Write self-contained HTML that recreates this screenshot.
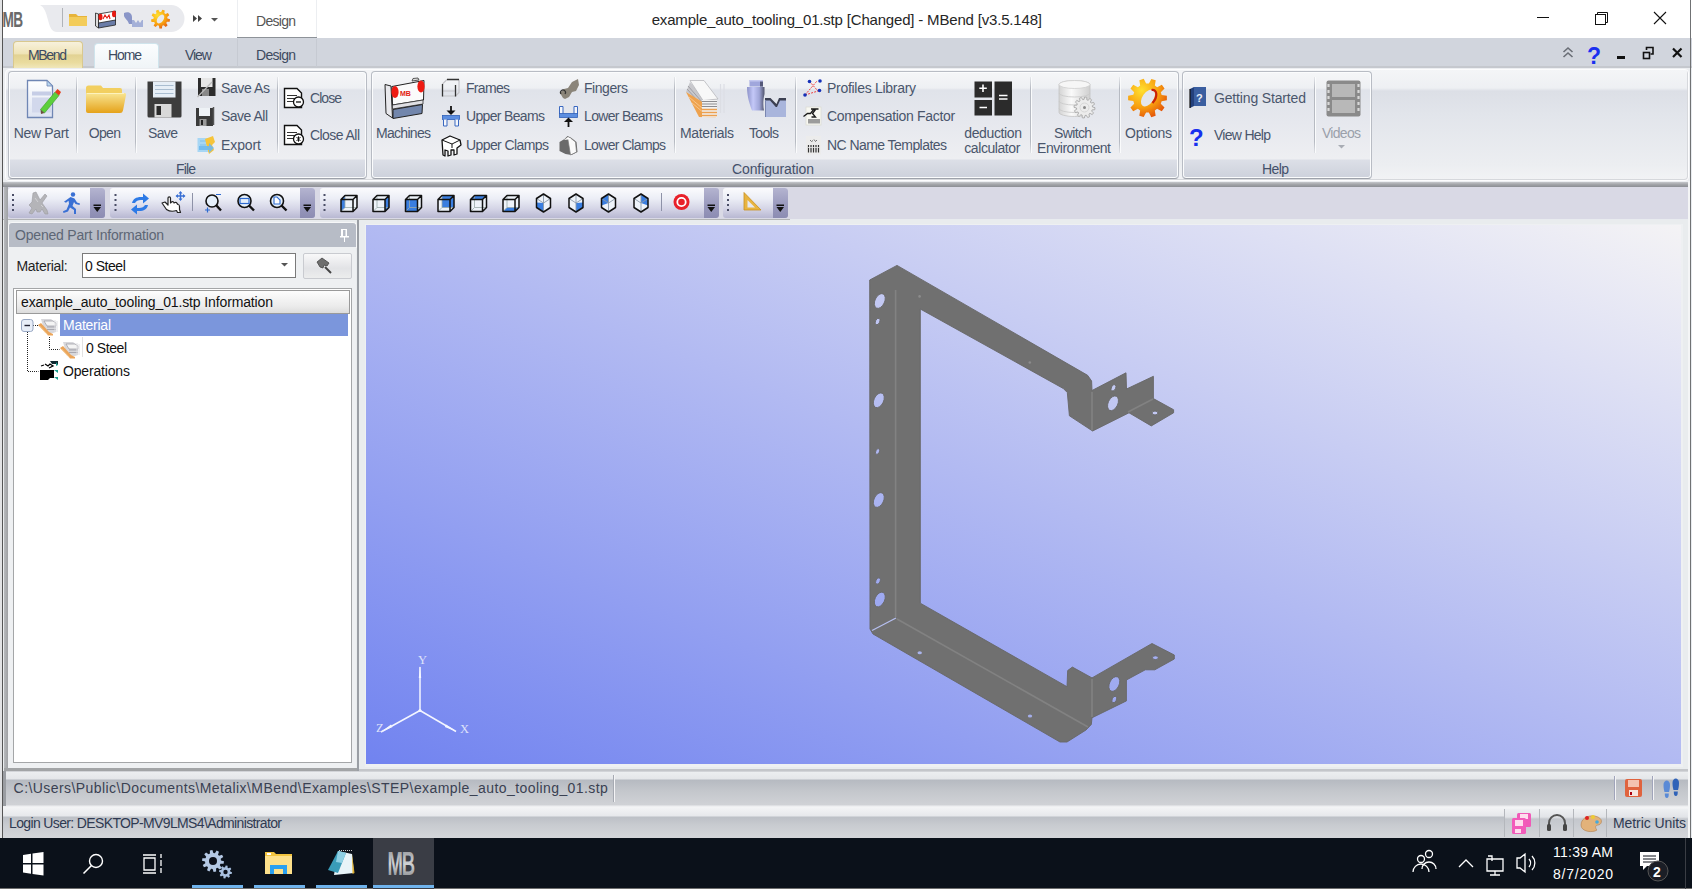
<!DOCTYPE html>
<html><head><meta charset="utf-8">
<style>
html,body{margin:0;padding:0}
body{width:1692px;height:889px;overflow:hidden;position:relative;font-family:"Liberation Sans",sans-serif;background:#e8ebef;color:#1e2a44}
.a{position:absolute}
.t{position:absolute;white-space:nowrap;line-height:1}
svg{position:absolute;overflow:visible}
.grp{position:absolute;top:71px;height:106px;border:1px solid #b8bcc4;border-bottom-color:#9ea2aa;border-radius:4px;background:linear-gradient(#f5f6f8 0px,#eef0f3 16px,#e0e3ea 18px,#e6e8ee 50px,#eeeff2 87px,#dcdfe7 88px,#cdd1db 106px);box-shadow:inset 0 0 0 1px #fbfcfd}
.lbl{font-size:14px;color:#44506a}
.rl{font-size:14px;color:#4a566c}
.tb{position:absolute;top:188px;height:30px;border-radius:3px;background:linear-gradient(#fbfbfd 0%,#eceef6 35%,#d4d4e6 70%,#b8b8d2 100%)}
.chev{position:absolute;top:188px;width:15px;height:30px;border-radius:0 3px 3px 0;background:linear-gradient(#b4b4d0,#9898bc 60%,#8c8cb2)}
.sep{position:absolute;top:77px;width:1px;height:76px;background:linear-gradient(rgba(180,184,192,0.2),#b6bac2 15%,#b6bac2 85%,rgba(180,184,192,0.2));box-shadow:1px 0 0 #fafbfc}

</style></head><body>

<!-- ===== TITLE BAR ===== -->
<div class="a" style="left:0;top:0;width:1692px;height:38px;background:#fff"></div>
<div class="t" style="left:651.7px;top:12px;font-size:15px;letter-spacing:-0.182px;color:#262626">example_auto_tooling_01.stp [Changed] - MBend [v3.5.148]</div>
<!-- QAT -->
<svg style="left:0;top:0" width="240" height="38">
<path d="M40 5 H171 A13.5 13.5 0 0 1 171 32 H57 C52 32 50 28 48 20 C46 12 44 7 40 5 Z" fill="#e9eaee"/>
<line x1="62.5" y1="8" x2="62.5" y2="27" stroke="#b0b3b8"/>
<text transform="translate(2.5 27) scale(0.62 1)" font-family="Liberation Sans" font-weight="bold" font-size="22" fill="#6a6a6a" letter-spacing="-1">MB</text>
<!-- folder -->
<path d="M69 14 h7 l2 2 h9 v10 h-18z" fill="#e7b43a"/><path d="M69 17 h18 v9 h-18z" fill="#f3cc5a"/>
<!-- machine -->
<path d="M95.5 13 l3 1 v14 l-3 -2z" fill="#ddd" stroke="#222" stroke-width="0.8"/><path d="M98.5 14 l17 -3 v10 l-17 3z" fill="#fff" stroke="#222" stroke-width="0.8"/><ellipse cx="100.5" cy="17" rx="2" ry="3.2" fill="#e81a12"/><ellipse cx="114" cy="14" rx="2" ry="3.2" fill="#e81a12"/><path d="M103 19 l2 -4 l2 3 l2 -3 l1 4" fill="none" stroke="#e21b12" stroke-width="1.1"/><path d="M98.5 23 l17 -3 v5 l-17 3z" fill="#6a7ca8" stroke="#222" stroke-width="0.8"/>
<!-- tools -->
<path d="M124 13 c4 -2 8 0 8 4 v7 h-3 c-1 -4 -4 -5 -5 -8z" fill="#8a96c8"/><path d="M132 20 h11 v7 h-11z M134 20 l2 3 l2 -3 l2 3 l2 -3" fill="#a4b0d8"/>
<!-- gear -->
<path d="M167.48,18.41 L170.00,19.24 L169.61,21.71 L166.95,21.71 L166.22,23.04 L167.62,25.29 L165.74,26.93 L163.70,25.23 L162.29,25.77 L161.91,28.39 L159.41,28.44 L158.95,25.83 L157.52,25.33 L155.54,27.11 L153.60,25.53 L154.92,23.23 L154.15,21.94 L151.49,22.02 L151.02,19.57 L153.51,18.66 L153.74,17.16 L151.66,15.53 L152.87,13.34 L155.36,14.24 L156.51,13.25 L155.96,10.66 L158.29,9.76 L159.62,12.06 L161.13,12.03 L162.38,9.69 L164.75,10.50 L164.29,13.12 L165.47,14.07 L167.93,13.08 L169.22,15.22 L167.19,16.93Z" fill="url(#gOptQ)"/><defs><radialGradient id="gOptQ" cx="0.35" cy="0.3" r="0.8"><stop offset="0" stop-color="#ffe030"/><stop offset="0.6" stop-color="#f8a010"/><stop offset="1" stop-color="#e05010"/></radialGradient></defs><ellipse cx="160.5" cy="19" rx="3" ry="5" transform="rotate(35 160.5 19)" fill="#e8e9ee"/>
<path d="M193 15 l4 3.5 l-4 3.5z M198 15 l4 3.5 l-4 3.5z" fill="#444"/>
<path d="M211 18 h7 l-3.5 3.5z" fill="#555"/>
</svg>
<div class="a" style="left:237px;top:0;width:1px;height:38px;background:#eceef1"></div>
<div class="a" style="left:316px;top:0;width:1px;height:38px;background:#eceef1"></div>
<div class="a" style="left:237px;top:37px;width:80px;height:2px;background:#8e9399"></div>
<div class="t" style="left:256.0px;top:14px;font-size:14px;letter-spacing:-0.72px;color:#555">Design</div>
<!-- window controls -->
<div class="a" style="left:1537px;top:17px;width:12px;height:1px;background:#111"></div>
<svg style="left:1590px;top:10px" width="24" height="20"><rect x="5.5" y="4.5" width="10" height="10" fill="none" stroke="#111"/><path d="M7.5 4.5 v-2 h10 v10 h-2" fill="none" stroke="#111"/></svg>
<svg style="left:1650px;top:8px" width="20" height="20"><path d="M4 4 L16 16 M16 4 L4 16" stroke="#111" stroke-width="1.1"/></svg>


<!-- ===== TAB ROW ===== -->
<div class="a" style="left:0;top:38px;width:1692px;height:30px;background:#d1d5dd"></div>
<div class="a" style="left:0;top:66px;width:1692px;height:2px;background:#c5c8ce"></div>
<div class="a" style="left:13px;top:41px;width:68px;height:26px;border:1px solid #d9c88e;border-bottom:none;border-radius:4px 4px 0 0;background:linear-gradient(#f7f1dc 0%,#efe3b6 45%,#e2d293 50%,#eadc9f 80%,#f0e7bb 100%)"></div>
<div class="t" style="left:28.0px;top:48px;font-size:14px;letter-spacing:-1.35px;color:#3d4a5f">MBend</div>
<div class="a" style="left:94px;top:43px;width:63px;height:27px;border:1px solid #cfe4ec;border-bottom:none;border-radius:4px 4px 0 0;background:linear-gradient(#fbfdfe,#eef3f6)"></div>
<div class="t" style="left:108.0px;top:48px;font-size:14px;letter-spacing:-1.10px;color:#3d4a5f">Home</div>
<div class="t" style="left:185.0px;top:48px;font-size:14px;letter-spacing:-1.07px;color:#3d4a5f">View</div>
<div class="a" style="left:237px;top:39px;width:1px;height:28px;background:#c6cad2"></div><div class="a" style="left:316px;top:39px;width:1px;height:28px;background:#c6cad2"></div>
<div class="t" style="left:256.0px;top:48px;font-size:14px;letter-spacing:-0.72px;color:#3d4a5f">Design</div>
<!-- MDI controls -->
<svg style="left:1560px;top:44px" width="130" height="24">
<path d="M3.5 8 l4.5 -4 l4.5 4 M3.5 13 l4.5 -4 l4.5 4" fill="none" stroke="#6a6e76" stroke-width="1.6"/>
<text x="27" y="20" font-family="Liberation Sans" font-weight="bold" font-size="23" fill="#1a30f0">?</text>
<rect x="57" y="12" width="8" height="3" fill="#111"/>
<rect x="83.5" y="8.5" width="6" height="6" fill="none" stroke="#111" stroke-width="1.6"/><path d="M86.5 6 v-2.5 h6.5 v6.5 h-2.5" fill="none" stroke="#111" stroke-width="1.6"/>
<path d="M113 4.5 l8.5 8.5 M121.5 4.5 l-8.5 8.5" stroke="#111" stroke-width="2.2"/>
</svg>

<!-- ===== RIBBON ===== -->
<div class="a" style="left:3px;top:68px;width:1687px;height:118px;background:#eceef1"></div>
<div class="a" style="left:5px;top:69px;width:1682px;height:110px;border-radius:4px;background:linear-gradient(#f4f5f7 0px,#eef0f3 18px,#dcdfe6 21px,#e2e5eb 45px,#eceef1 95px,#f2f3f5 110px);border:1px solid #fdfdfe;box-shadow:inset -1px -1px 0 #d6d8dc"></div>
<div class="a" style="left:3px;top:182px;width:1687px;height:5px;background:linear-gradient(#c4c6ca,#a2a4a8 50%,#8c8e94)"></div>
<div class="grp" style="left:8px;width:357px"></div>
<div class="grp" style="left:371px;width:806px"></div>
<div class="grp" style="left:1182px;width:188px"></div>
<!-- separators -->
<div class="sep" style="left:76px"></div><div class="sep" style="left:135px"></div><div class="sep" style="left:277px"></div>
<div class="sep" style="left:674px"></div><div class="sep" style="left:795px"></div><div class="sep" style="left:1030px"></div><div class="sep" style="left:1119px"></div>
<div class="sep" style="left:1314px"></div>
<!-- ribbon icons: File -->
<svg style="left:0;top:0" width="1400" height="186">
<defs>
<linearGradient id="gFold" x1="0" y1="0" x2="0" y2="1"><stop offset="0" stop-color="#f8e592"/><stop offset="1" stop-color="#e5a21a"/></linearGradient>
<linearGradient id="gDoc" x1="0" y1="0" x2="0" y2="1"><stop offset="0" stop-color="#ffffff"/><stop offset="1" stop-color="#dde3f2"/></linearGradient>
</defs>
<!-- New Part -->
<path d="M27.5 80.5 H47 L52.5 86 V117.5 H27.5 Z" fill="url(#gDoc)" stroke="#6f86b4" stroke-width="1.3"/>
<path d="M47 80.5 V86 H52.5z" fill="#b8d6f0" stroke="#6f86b4" stroke-width="0.8"/>
<rect x="32" y="91.5" width="19" height="4" fill="#c6cde6"/><rect x="32" y="97.5" width="19" height="15" fill="#d2d8ec"/>
<path d="M40.5 109.5 L55 92 L59 95.5 L44.5 113 Z" fill="#5ccf3c" stroke="#3f9a2a" stroke-width="0.6"/>
<path d="M55 92 L57.5 89 L61 92 L59 95.5z" fill="#e23c1a"/>
<path d="M40.5 109.5 L44.5 113 L41 114z" fill="#6a5040"/>
<!-- Open -->
<path d="M86 88 Q86 85.5 88.5 85.5 H101 L103 88 H120 Q122 88 122 90 V96 H86z" fill="#f2cf60"/>
<path d="M86 93 H124.5 Q126.5 93 126 95 L123 110.5 Q122.5 113 120 113 H88 Q86 113 86 111z" fill="url(#gFold)"/>
<path d="M87 93.5 H124" stroke="#fff6c8" stroke-width="1" opacity="0.8"/>
<!-- Save -->
<path d="M147.5 81.5 H181.5 V116 Q181.5 117.5 180 117.5 H149 Q147.5 117.5 147.5 116z" fill="#3c3c3c"/>
<rect x="153" y="81.5" width="22.5" height="16" fill="#e6eef6"/>
<path d="M155 85.5 H173.5 M155 89.5 H173.5 M155 93.5 H173.5" stroke="#a9bdd0" stroke-width="1"/>
<rect x="154.5" y="104" width="17" height="13.5" fill="#d8d8d8"/><rect x="156.5" y="106" width="4.5" height="9" fill="#2a2a2a"/>
<!-- Save As -->
<path d="M198 78 H215.5 V96 H198z" fill="#2c2c2c"/><rect x="201" y="78" width="11.5" height="9" fill="#e6e6e6"/><rect x="202" y="89" width="7" height="7" fill="#888"/>
<path d="M197.5 97 L212 82" stroke="#bbb" stroke-width="1.2"/>
<!-- Save All -->
<path d="M196 108 H213 V126 H196z" fill="#3a3a3a"/><rect x="199" y="108" width="11" height="8" fill="#eef2f6"/><rect x="199.5" y="119" width="7" height="7" fill="#999"/><rect x="201" y="120" width="2" height="5" fill="#222"/>
<path d="M213.5 107 V125" stroke="#555" stroke-width="1.5"/>
<!-- Export -->
<rect x="197.5" y="138" width="12" height="14" fill="#a7d6f4"/><path d="M200 141 h8 M200 145 h6" stroke="#7ec0ea" stroke-width="1"/>
<path d="M205 139 l8 -3 l2 6 l-3 3 l2 5 l-5 4 l-1 -3z" fill="#f6c43a"/><path d="M199 146 h10 v-3 l5 5 l-5 5 v-3 h-10z" fill="#6fb9ee" opacity="0.9"/>
<!-- Close -->
<path d="M284.5 88.5 H297 L301.5 93 V107.5 H284.5z" fill="#fff" stroke="#111" stroke-width="1.4"/>
<path d="M287 95.5 H297 M287 98.5 H295 M287 101.5 H293" stroke="#333" stroke-width="1.2"/>
<circle cx="298.5" cy="102" r="5" fill="#fff" stroke="#111" stroke-width="1.3"/><path d="M296 102h5" stroke="#111" stroke-width="1.3"/>
<!-- Close All -->
<path d="M284.5 125.5 H297 L301.5 130 V144.5 H284.5z" fill="#fff" stroke="#111" stroke-width="1.4"/>
<path d="M287 132.5 H297 M287 135.5 H295 M287 138.5 H293" stroke="#333" stroke-width="1.2"/>
<circle cx="298.5" cy="139" r="5" fill="#fff" stroke="#111" stroke-width="1.3"/><path d="M296.5 137l4 4 M300.5 137l-4 4 M298.5 136.3v5.4" stroke="#111" stroke-width="1"/>
</svg>
<!-- ribbon icons: Configuration + Help -->
<svg style="left:0;top:0" width="1400" height="186">
<defs>
<linearGradient id="gGear" x1="0" y1="0" x2="1" y2="1"><stop offset="0" stop-color="#ffd21a"/><stop offset="0.6" stop-color="#f59a0c"/><stop offset="1" stop-color="#e0520a"/></linearGradient>
<linearGradient id="gTool" x1="0" y1="0" x2="1" y2="0"><stop offset="0" stop-color="#8c94c4"/><stop offset="0.5" stop-color="#b4bcec"/><stop offset="1" stop-color="#8890c0"/></linearGradient>
<linearGradient id="gDb" x1="0" y1="0" x2="1" y2="0"><stop offset="0" stop-color="#d4d4d4"/><stop offset="0.4" stop-color="#fafafa"/><stop offset="1" stop-color="#cfcfcf"/></linearGradient>
</defs>
<!-- Machines -->
<path d="M385 84.5 L391 86 L392.5 118 L386 113.5z" fill="#e8e8ec" stroke="#222" stroke-width="1"/>
<path d="M392 86.5 L424 80.5 L423.5 100 L392.5 105z" fill="#fbfbfb" stroke="#222" stroke-width="1"/>
<path d="M412 81 L413 78.5 L418 78 L419 80z" fill="#ddd" stroke="#333" stroke-width="0.8"/>
<ellipse cx="395" cy="92" rx="3.6" ry="6" fill="#ee1a12"/><ellipse cx="421" cy="86.5" rx="3.6" ry="6" fill="#ee1a12"/>
<text x="400" y="96" font-family="Liberation Sans" font-weight="bold" font-size="7" fill="#e21b12">MB</text>
<path d="M392.5 105 L423 100 L423 104 L392.5 109z" fill="#e0e0e4" stroke="#333" stroke-width="0.8"/>
<path d="M393 109.5 L422.5 104.5 L422 113.5 L393 118.5z" fill="#7286ac" stroke="#222" stroke-width="1"/>
<!-- Frames -->
<path d="M442.5 84 l4.5 -4.5 M459 79.5 v13 l-3.5 3.5 M442.5 96 h13 M443 91 h12" fill="none" stroke="#c4c4c8" stroke-width="1.2"/>
<path d="M442.5 84 v12.5 M447 79.5 h12 M455.5 85 v11.5" fill="none" stroke="#333" stroke-width="1.3"/>
<!-- Upper Beams -->
<path d="M451 106 v5" stroke="#111" stroke-width="1.8"/><path d="M446.5 110.5 h9 l-4.5 4.5z" fill="#111"/>
<rect x="442.5" y="115.5" width="17" height="4" fill="#5c8ee0" stroke="#3060b8" stroke-width="0.8"/><path d="M443.5 119.5 v6.5 h3.5 v-6.5 M455 119.5 v6.5 h3.5 v-6.5" fill="#f4f6fb" stroke="#3a68c0" stroke-width="1"/>
<!-- Upper Clamps -->
<path d="M442 140 l8 -4 l10 4 l1 5 l-4 3 v6 l-3 1 v-5 h-3 v5 l-3 1 v-5 l-3 -1 v6 l-2 -1z" fill="#fff" stroke="#111" stroke-width="1.3" stroke-linejoin="round"/><path d="M442 140 l10 4 l8 -4 M452 144 v4" fill="none" stroke="#111" stroke-width="1"/>
<!-- Fingers -->
<path d="M560 93 l4 -4 l4 -1 l4 -6 l6 -3 l1 6 l-3 6 l-4 1 l-3 5 l-4 2 l-2 -1z" fill="#8b857a"/><path d="M561 94 a2.5 2.5 0 1 1 4 0" fill="none" stroke="#333" stroke-width="1.2"/>
<!-- Lower Beams -->
<path d="M559.5 114 v-7.5 h3.5 v7.5 M574 114 v-7.5 h3.5 v7.5" fill="#f4f6fb" stroke="#3a68c0" stroke-width="1"/>
<rect x="559.5" y="113.5" width="18" height="4" fill="#5c8ee0" stroke="#3060b8" stroke-width="0.8"/>
<path d="M568.5 121 v6" stroke="#111" stroke-width="1.8"/><path d="M564 122 h9 l-4.5 -4.5z" fill="#111"/>
<!-- Lower Clamps -->
<path d="M559.5 142 l5 -3 l3 -3 l4 2 l5 4 l1 10 l-6 3 l-6 -1 l-6 -3z" fill="#6a6a6a"/><path d="M567.5 137 l3 1 l5 4 l1 10 l-6 3z" fill="#fafafa" stroke="#777" stroke-width="0.7"/><path d="M564 140 l4 -3 l3 2" fill="#fff"/>
<!-- Materials -->
<path d="M686 92 L690 82 L704 99 L701 101z" fill="#c8c8cc"/>
<path d="M690 80.5 L704 80.5 L718 99 L703 100.5z" fill="#f8f8f8" stroke="#b0b0b4" stroke-width="0.7"/>
<path d="M688 86 L702 102 M687 89 L701.5 105" stroke="#9a9aa0" stroke-width="0.9"/>
<path d="M686 92 L701 101 L716 117.5 L699 117z" fill="#eea24e"/>
<path d="M689 97 L702 108 M692 103 L704 113" stroke="#f8c890" stroke-width="0.9"/>
<rect x="702" y="100" width="15" height="17.5" fill="#f2f2f2"/>
<path d="M702 101.5 H717 M702 104 H717 M702 106.5 H717" stroke="#8c8c90" stroke-width="1.1"/>
<path d="M702 109.5 H717 M702 112.5 H717 M702 115.5 H717" stroke="#eca050" stroke-width="1.3"/>
<path d="M720.5 84 V113 M724 84 V113" stroke="#dcdee4" stroke-width="1.2"/>
<!-- Tools -->
<defs><linearGradient id="gPunch" x1="0" y1="0" x2="1" y2="0"><stop offset="0" stop-color="#8c92c8"/><stop offset="0.35" stop-color="#c4c8f8"/><stop offset="0.7" stop-color="#a0a6d8"/><stop offset="1" stop-color="#50546c"/></linearGradient></defs>
<rect x="749.5" y="80" width="13.5" height="6.5" fill="#a0a6dc"/><rect x="760" y="80" width="3" height="6.5" fill="#55597a"/><rect x="749.5" y="80" width="13.5" height="1.5" fill="#c4c8f0"/>
<path d="M747 87 L764.5 87 L764.5 94 C763 100 763 106 764 110.5 L752 110.5 C749.5 104 747 96 747 87 Z" fill="url(#gPunch)"/>
<path d="M765 99.5 h5.5 l6 6.5 l2.5 -6.5 h7 v17.5 h-21 z" fill="#a9b5dc"/>
<path d="M765 98 h5.5 l6 6 l2.5 -6 h7 v2.5 h-6 l-3 6.5 h-1.2 l-5.8 -6.5 h-5 z" fill="#3c4052"/>
<path d="M765.5 100 v17" stroke="#7a86b0" stroke-width="1"/>
<!-- Profiles Library -->
<path d="M805 95 L817 81 M809 81 L818 91 M805 95 L818 91" stroke="#f04040" stroke-width="1" stroke-dasharray="2 1.2"/>
<circle cx="809.5" cy="81.5" r="1.8" fill="#1530b8"/><circle cx="820" cy="81" r="1.8" fill="#1530b8"/><circle cx="819.5" cy="90.5" r="1.8" fill="#1530b8"/><circle cx="805" cy="95" r="1.8" fill="#1530b8"/>
<!-- Compensation Factor -->
<rect x="806" y="107" width="15" height="18" fill="#f8f8f2" stroke="#dcdcd4" stroke-width="0.8"/><rect x="808" y="119" width="12" height="4.5" fill="#9c9c9c"/>
<path d="M803.5 116.5 l4 -3 l3 0 l3 -4 l3 -0.5 M811 109 h7.5 M815.5 109.5 l-3 4 l3 3.5 h-4" fill="none" stroke="#1a1a1a" stroke-width="1.3"/>
<!-- NC Name Templates -->
<rect x="806" y="136" width="15" height="18.5" fill="#ececec"/>
<path d="M808.5 145 v7.5 M811 145 v7.5 M813.5 145 v7.5 M816 145 v7.5 M818.5 145 v7.5" stroke="#333" stroke-width="1.2"/>
<path d="M808 147.5 h11.5" stroke="#ececec" stroke-width="0.8"/>
<path d="M810 140 l1.5 1.5 l1.5 -1 M814 139.5 l1.5 2 l1.5 -1.5" fill="none" stroke="#666" stroke-width="0.9"/>
<!-- deduction calculator -->
<rect x="974.5" y="81.5" width="17.5" height="16" fill="#2b2b2b"/><rect x="974.5" y="100" width="17.5" height="15.5" fill="#2b2b2b"/><rect x="994.5" y="81.5" width="17.5" height="34" fill="#2b2b2b"/>
<path d="M983 84.5 v7.5 M979.3 88.2 h7.5 M979.5 107.5 h7.5 M999 95.5 h8.5 M999 99 h8.5" stroke="#fff" stroke-width="1.6"/>
<!-- Switch Environment -->
<path d="M1059 84.5 a15.5 4 0 0 1 31 0 v28 a15.5 4 0 0 1 -31 0z" fill="url(#gDb)" stroke="#c4c4c4" stroke-width="0.8"/>
<ellipse cx="1074.5" cy="84.5" rx="15.5" ry="4" fill="#f6f6f6" stroke="#cfcfcf" stroke-width="0.8"/>
<path d="M1059 93 a15.5 4 0 0 0 31 0 M1059 101 a15.5 4 0 0 0 31 0 M1059 108.5 a15.5 4 0 0 0 31 0" fill="none" stroke="#c8c8c8" stroke-width="0.8"/>
<path d="M1092.48,107.00 L1095.00,107.70 L1094.75,109.76 L1092.15,109.85 L1091.67,111.06 L1093.49,112.92 L1092.25,114.58 L1089.95,113.36 L1088.93,114.16 L1089.58,116.69 L1087.67,117.51 L1086.29,115.30 L1085.00,115.48 L1084.30,118.00 L1082.24,117.75 L1082.15,115.15 L1080.94,114.67 L1079.08,116.49 L1077.42,115.25 L1078.64,112.95 L1077.84,111.93 L1075.31,112.58 L1074.49,110.67 L1076.70,109.29 L1076.52,108.00 L1074.00,107.30 L1074.25,105.24 L1076.85,105.15 L1077.33,103.94 L1075.51,102.08 L1076.75,100.42 L1079.05,101.64 L1080.07,100.84 L1079.42,98.31 L1081.33,97.49 L1082.71,99.70 L1084.00,99.52 L1084.70,97.00 L1086.76,97.25 L1086.85,99.85 L1088.06,100.33 L1089.92,98.51 L1091.58,99.75 L1090.36,102.05 L1091.16,103.07 L1093.69,102.42 L1094.51,104.33 L1092.30,105.71Z" fill="#ececec" stroke="#a8a8a8" stroke-width="0.9"/><circle cx="1084.5" cy="107.5" r="4.5" fill="none" stroke="#d0d0d0" stroke-width="0.8"/><circle cx="1084.5" cy="107.5" r="1.5" fill="#8a8a8a"/>
<!-- Options -->
<defs><radialGradient id="gOpt" cx="0.35" cy="0.3" r="0.8"><stop offset="0" stop-color="#ffe030"/><stop offset="0.55" stop-color="#f8a010"/><stop offset="1" stop-color="#e04808"/></radialGradient></defs>
<path d="M1161.67,94.91 L1166.87,95.72 L1166.86,100.34 L1161.66,101.14 L1160.78,103.82 L1164.51,107.54 L1161.78,111.28 L1157.10,108.86 L1154.82,110.52 L1155.65,115.72 L1151.25,117.14 L1148.88,112.43 L1146.06,112.43 L1143.68,117.12 L1139.29,115.69 L1140.14,110.49 L1137.86,108.83 L1133.17,111.23 L1130.46,107.48 L1134.20,103.78 L1133.33,101.09 L1128.13,100.28 L1128.14,95.66 L1133.34,94.86 L1134.22,92.18 L1130.49,88.46 L1133.22,84.72 L1137.90,87.14 L1140.18,85.48 L1139.35,80.28 L1143.75,78.86 L1146.12,83.57 L1148.94,83.57 L1151.32,78.88 L1155.71,80.31 L1154.86,85.51 L1157.14,87.17 L1161.83,84.77 L1164.54,88.52 L1160.80,92.22Z" fill="url(#gOpt)"/>
<ellipse cx="1148" cy="98" rx="5.5" ry="9.5" transform="rotate(35 1148 98)" fill="#e4e6ec"/>
<path d="M1151.5 90 a5.5 9.5 35 0 1 1 13" fill="none" stroke="#c8200a" stroke-width="2.2"/>
<!-- Getting Started -->
<path d="M1190 89 l4 -2 h12 v19 h-12 l-4 2z" fill="#23407c"/><path d="M1194 87 h12 v19 h-12z" fill="#3a5ea0"/><path d="M1190 89 v19" stroke="#111" stroke-width="1.2"/>
<text x="1196" y="102" font-family="Liberation Sans" font-weight="bold" font-size="11" fill="#e8eef8">?</text>
<!-- View Help -->
<text x="1189" y="146" font-family="Liberation Sans" font-weight="bold" font-size="24" fill="#1830ee">?</text>
<!-- Videos -->
<rect x="1326.5" y="80.5" width="34" height="36" rx="2" fill="#8a8a8a"/>
<rect x="1332" y="84" width="23" height="13" fill="#b8b8b8"/><rect x="1332" y="100" width="23" height="13" fill="#b8b8b8"/>
<path d="M1328.5 84 v3 M1328.5 90 v3 M1328.5 96 v3 M1328.5 102 v3 M1328.5 108 v3 M1358.5 84 v3 M1358.5 90 v3 M1358.5 96 v3 M1358.5 102 v3 M1358.5 108 v3" stroke="#d8d8d8" stroke-width="2.2"/>
</svg>
<!-- labels -->
<div class="t rl" style="left:13.7px;top:126px;letter-spacing:-0.33px">New Part</div>
<div class="t rl" style="left:88.7px;top:126px;letter-spacing:-0.63px">Open</div>
<div class="t rl" style="left:148.0px;top:126px;letter-spacing:-0.63px">Save</div>
<div class="t rl" style="left:221.0px;top:81px;letter-spacing:-0.40px">Save As</div>
<div class="t rl" style="left:221.0px;top:109px;letter-spacing:-0.51px">Save All</div>
<div class="t rl" style="left:221.0px;top:138px;letter-spacing:-0.10px">Export</div>
<div class="t rl" style="left:310.0px;top:91px;letter-spacing:-0.95px">Close</div>
<div class="t rl" style="left:310.0px;top:128px;letter-spacing:-0.56px">Close All</div>
<div class="t rl" style="left:376.0px;top:126px;letter-spacing:-0.70px">Machines</div>
<div class="t rl" style="left:466.0px;top:81px;letter-spacing:-0.68px">Frames</div>
<div class="t rl" style="left:466.0px;top:109px;letter-spacing:-0.66px">Upper Beams</div>
<div class="t rl" style="left:466.0px;top:138px;letter-spacing:-0.59px">Upper Clamps</div>
<div class="t rl" style="left:584.0px;top:81px;letter-spacing:-0.45px">Fingers</div>
<div class="t rl" style="left:584.0px;top:109px;letter-spacing:-0.66px">Lower Beams</div>
<div class="t rl" style="left:584.0px;top:138px;letter-spacing:-0.68px">Lower Clamps</div>
<div class="t rl" style="left:680.0px;top:126px;letter-spacing:-0.35px">Materials</div>
<div class="t rl" style="left:749.0px;top:126px;letter-spacing:-0.68px">Tools</div>
<div class="t rl" style="left:827.0px;top:81px;letter-spacing:-0.29px">Profiles Library</div>
<div class="t rl" style="left:827.0px;top:109px;letter-spacing:-0.32px">Compensation Factor</div>
<div class="t rl" style="left:827.0px;top:138px;letter-spacing:-0.56px">NC Name Templates</div>
<div class="t rl" style="left:964.3px;top:126px;letter-spacing:-0.38px">deduction</div>
<div class="t rl" style="left:964.3px;top:141px;letter-spacing:-0.43px">calculator</div>
<div class="t rl" style="left:1054.0px;top:126px;letter-spacing:-0.64px">Switch</div>
<div class="t rl" style="left:1037.0px;top:141px;letter-spacing:-0.46px">Environment</div>
<div class="t rl" style="left:1125.0px;top:126px;letter-spacing:-0.20px">Options</div>
<div class="t rl" style="left:1214.0px;top:91px;letter-spacing:-0.16px">Getting Started</div>
<div class="t rl" style="left:1214.0px;top:128px;letter-spacing:-0.72px">View Help</div>
<div class="t rl" style="left:1322.0px;top:126px;letter-spacing:-0.72px;color:#9aa0aa">Videos</div>
<div class="t lbl" style="left:176.0px;top:162px;letter-spacing:-0.87px">File</div>
<div class="t lbl" style="left:732.0px;top:162px;letter-spacing:-0.11px">Configuration</div>
<div class="t lbl" style="left:1262.0px;top:162px;letter-spacing:-0.60px">Help</div>
<svg style="left:1338px;top:145px" width="8" height="5"><path d="M0 0h7l-3.5 3.5z" fill="#a8acb4"/></svg>


<!-- ===== TOOLBAR ROW ===== -->
<div class="a" style="left:3px;top:187px;width:1687px;height:32px;background:#d9d9e5"></div>
<div class="a" style="left:3px;top:219px;width:787px;height:2px;background:linear-gradient(#a8aaaa,#d0d2d4)"></div>
<div class="tb" style="left:8px;width:97px"></div><div class="chev" style="left:90px"></div>
<div class="tb" style="left:110px;width:205px"></div><div class="chev" style="left:300px"></div>
<div class="tb" style="left:320px;width:398px"></div><div class="chev" style="left:704px"></div>
<div class="tb" style="left:723px;width:65px"></div><div class="chev" style="left:773px"></div>
<svg style="left:0;top:186px" width="800" height="34">
<g fill="#4a4e66"><rect x="12" y="8" width="2" height="2"/><rect x="12" y="13" width="2" height="2"/><rect x="12" y="18" width="2" height="2"/><rect x="12" y="23" width="2" height="2"/>
<rect x="114.5" y="8" width="2" height="2"/><rect x="114.5" y="13" width="2" height="2"/><rect x="114.5" y="18" width="2" height="2"/><rect x="114.5" y="23" width="2" height="2"/>
<rect x="323.5" y="8" width="2" height="2"/><rect x="323.5" y="13" width="2" height="2"/><rect x="323.5" y="18" width="2" height="2"/><rect x="323.5" y="23" width="2" height="2"/>
<rect x="727" y="8" width="2" height="2"/><rect x="727" y="13" width="2" height="2"/><rect x="727" y="18" width="2" height="2"/><rect x="727" y="23" width="2" height="2"/></g>
<g fill="#111"><path d="M93.5 21h7.5l-3.75 5z M93.5 18.5h7.5v1.5h-7.5z"/><path d="M303.5 21h7.5l-3.75 5z M303.5 18.5h7.5v1.5h-7.5z"/><path d="M707.5 21h7.5l-3.75 5z M707.5 18.5h7.5v1.5h-7.5z"/><path d="M776.5 21h7.5l-3.75 5z M776.5 18.5h7.5v1.5h-7.5z"/></g>
<line x1="192.5" y1="7" x2="192.5" y2="25" stroke="#8e92a8"/>
<line x1="661.5" y1="7" x2="661.5" y2="25" stroke="#8e92a8"/>
<polygon points="341,13.5 345,9.5 357,9.5 357,21.5 353,25.5 341,25.5" fill="#eef3fa"/><polygon points="341,13.5 345,9.5 345,21.5 341,25.5" fill="#3a7ee0"/><path d="M345 21.5 h12 M345 9.5 v12 l-4 4" stroke="#9aa" stroke-width="0.8" fill="none"/><path d="M341 13.5 l4 -4 h12 v12 l-4 4 h-12z M341 13.5 h12 v12 M353 13.5 l4 -4" stroke="#111" stroke-width="1.5" fill="none" stroke-linejoin="round"/>
<polygon points="373,13.5 377,9.5 389,9.5 389,21.5 385,25.5 373,25.5" fill="#eef3fa"/><polygon points="385,13.5 389,9.5 389,21.5 385,25.5" fill="#3a7ee0"/><path d="M377 21.5 h12 M377 9.5 v12 l-4 4" stroke="#9aa" stroke-width="0.8" fill="none"/><path d="M373 13.5 l4 -4 h12 v12 l-4 4 h-12z M373 13.5 h12 v12 M385 13.5 l4 -4" stroke="#111" stroke-width="1.5" fill="none" stroke-linejoin="round"/>
<polygon points="405.5,13.5 409.5,9.5 421.5,9.5 421.5,21.5 417.5,25.5 405.5,25.5" fill="#eef3fa"/><polygon points="405.5,13.5 417.5,13.5 417.5,25.5 405.5,25.5" fill="#3a7ee0"/><path d="M409.5 21.5 h12 M409.5 9.5 v12 l-4 4" stroke="#9aa" stroke-width="0.8" fill="none"/><path d="M405.5 13.5 l4 -4 h12 v12 l-4 4 h-12z M405.5 13.5 h12 v12 M417.5 13.5 l4 -4" stroke="#111" stroke-width="1.5" fill="none" stroke-linejoin="round"/>
<polygon points="438,13.5 442,9.5 454,9.5 454,21.5 450,25.5 438,25.5" fill="#eef3fa"/><polygon points="442,9.5 454,9.5 454,21.5 442,21.5" fill="#3a7ee0"/><path d="M442 21.5 h12 M442 9.5 v12 l-4 4" stroke="#9aa" stroke-width="0.8" fill="none"/><path d="M438 13.5 l4 -4 h12 v12 l-4 4 h-12z M438 13.5 h12 v12 M450 13.5 l4 -4" stroke="#111" stroke-width="1.5" fill="none" stroke-linejoin="round"/>
<polygon points="470.5,13.5 474.5,9.5 486.5,9.5 486.5,21.5 482.5,25.5 470.5,25.5" fill="#eef3fa"/><polygon points="470.5,13.5 474.5,9.5 486.5,9.5 482.5,13.5" fill="#3a7ee0"/><path d="M474.5 21.5 h12 M474.5 9.5 v12 l-4 4" stroke="#9aa" stroke-width="0.8" fill="none"/><path d="M470.5 13.5 l4 -4 h12 v12 l-4 4 h-12z M470.5 13.5 h12 v12 M482.5 13.5 l4 -4" stroke="#111" stroke-width="1.5" fill="none" stroke-linejoin="round"/>
<polygon points="503,13.5 507,9.5 519,9.5 519,21.5 515,25.5 503,25.5" fill="#eef3fa"/><polygon points="503,25.5 507,21.5 519,21.5 515,25.5" fill="#3a7ee0"/><path d="M507 21.5 h12 M507 9.5 v12 l-4 4" stroke="#9aa" stroke-width="0.8" fill="none"/><path d="M503 13.5 l4 -4 h12 v12 l-4 4 h-12z M503 13.5 h12 v12 M515 13.5 l4 -4" stroke="#111" stroke-width="1.5" fill="none" stroke-linejoin="round"/>
<polygon points="543.5,8 550.5,12.5 550.5,21.5 543.5,26 536.5,21.5 536.5,12.5" fill="#eef3fa"/><polygon points="536.5,16.5 543.5,17 543.5,26 536.5,21.5" fill="#3a7ee0"/><path d="M543.5 8 V26 M536.5 12.5 L543.5 17 L550.5 12.5" stroke="#8a9aaa" stroke-width="0.9" fill="none"/><polygon points="543.5,8 550.5,12.5 550.5,21.5 543.5,26 536.5,21.5 536.5,12.5" fill="none" stroke="#111" stroke-width="1.5" stroke-linejoin="round"/>
<polygon points="576,8 583,12.5 583,21.5 576,26 569,21.5 569,12.5" fill="#eef3fa"/><polygon points="583,16.5 576,17 576,26 583,21.5" fill="#3a7ee0"/><path d="M576 8 V26 M569 12.5 L576 17 L583 12.5" stroke="#8a9aaa" stroke-width="0.9" fill="none"/><polygon points="576,8 583,12.5 583,21.5 576,26 569,21.5 569,12.5" fill="none" stroke="#111" stroke-width="1.5" stroke-linejoin="round"/>
<polygon points="608.5,8 615.5,12.5 615.5,21.5 608.5,26 601.5,21.5 601.5,12.5" fill="#eef3fa"/><polygon points="608.5,8 601.5,12.5 601.5,19.5 608.5,17" fill="#3a7ee0"/><path d="M608.5 8 V26 M601.5 12.5 L608.5 17 L615.5 12.5" stroke="#8a9aaa" stroke-width="0.9" fill="none"/><polygon points="608.5,8 615.5,12.5 615.5,21.5 608.5,26 601.5,21.5 601.5,12.5" fill="none" stroke="#111" stroke-width="1.5" stroke-linejoin="round"/>
<polygon points="641,8 648,12.5 648,21.5 641,26 634,21.5 634,12.5" fill="#eef3fa"/><polygon points="641,8 648,12.5 648,19.5 641,17" fill="#3a7ee0"/><path d="M641 8 V26 M634 12.5 L641 17 L648 12.5" stroke="#8a9aaa" stroke-width="0.9" fill="none"/><polygon points="641,8 648,12.5 648,21.5 641,26 634,21.5 634,12.5" fill="none" stroke="#111" stroke-width="1.5" stroke-linejoin="round"/>
<!-- X figure gray -->
<g fill="#b4b4b8" stroke="#9a9aa0" stroke-width="0.6">
<path d="M33 7 l3 -1 l4 8 l5 -6 l2 2 l-5 7 l5 7 l1 4 l-3 0 l-3 -5 l-2 3 h-3 l-1 -3 l-4 5 l-3 -1 l3 -5 l-3 -3 l3 -3z"/>
</g>
<path d="M35 12 l3 4 M41 19 l2 2" stroke="#d8d8dc" stroke-width="0.8"/>
<!-- runner blue -->
<g fill="#3a70d4">
<circle cx="73" cy="8.5" r="2.2"/>
<path d="M70.5 11 l4 1.5 l2.5 4 l3 1 l-0.5 1.5 l-4 -1 l-1.5 -2 l-1.5 4 l3.5 3 l0 5 l-2 0 l0 -4 l-4 -2.5 l-2 4 l-4.5 1.5 l-0.5 -1.8 l3.5 -1.5 l2.5 -6 l-0.5 -3 l-2.5 2 l-2 -1z"/>
</g>
<!-- refresh -->
<path d="M132 17 c1 -4 4 -6 9 -6 h2 v-3.5 l6 5 l-6 5 v-3.5 h-2 c-3 0 -5 1 -6 3z" fill="#2d7ae6"/>
<path d="M148 19 c-1 4 -4 6 -9 6 h-2 v3.5 l-6 -5 l6 -5 v3.5 h2 c3 0 5 -1 6 -3z" fill="#2d7ae6"/>
<!-- hand -->
<path d="M162 17 l3 -1 l3 3 v-7 c0 -1.5 2.5 -1.5 2.5 0 v5 l1 -1 c1 -1 2.5 0 2.5 1 l1 -0.5 c1 -0.5 2 0 2 1 l1 1 c1 0 1.5 1 1.5 2 v3 l1 3 h-3 l-1 -2 c-3 1 -7 1 -10 -1z" fill="#fff" stroke="#222" stroke-width="1.2" stroke-linejoin="round"/>
<path d="M180.5 6 v8 M176.5 10 h8" stroke="#3a70d4" stroke-width="1.4"/><path d="M178.5 7.5 l2 -2.5 l2 2.5z M178.5 12.5 l2 2.5 l2 -2.5z M178 8 l-2.5 2 l2.5 2z M183 8 l2.5 2 l-2.5 2z" fill="#3a70d4"/>
<!-- zoom 1 -->
<circle cx="212" cy="15" r="6" fill="#e6f0fb" stroke="#111" stroke-width="1.6"/><path d="M216 19 l5 5.5" stroke="#111" stroke-width="2.4"/><path d="M205 24 h5 M207.5 21.5 v5 M216 8.5 h5" stroke="#2d6ad0" stroke-width="1.2"/>
<!-- zoom rect -->
<circle cx="244.5" cy="15" r="6.5" fill="#e6f0fb" stroke="#111" stroke-width="1.6"/><path d="M249 19.5 l5 5" stroke="#111" stroke-width="2.4"/><rect x="240" y="12.5" width="9" height="5" fill="none" stroke="#2d6ad0" stroke-width="1.2"/>
<!-- zoom page -->
<circle cx="277" cy="15" r="6.5" fill="#e6f0fb" stroke="#111" stroke-width="1.6"/><path d="M281.5 19.5 l5 5" stroke="#111" stroke-width="2.4"/><path d="M274 11 v7 h6 v-4 l-3 -3z" fill="#fff" stroke="#2d6ad0" stroke-width="1.1"/>
<!-- red circle -->
<circle cx="681.5" cy="16" r="8" fill="#e8202a"/><circle cx="681.5" cy="16" r="4.2" fill="none" stroke="#fff" stroke-width="1.8"/><circle cx="681.5" cy="16" r="1.7" fill="#e8202a"/>
<!-- set square -->
<path d="M744 6.5 l17 17.5 h-17z" fill="#e8b440" stroke="#c89020" stroke-width="0.8"/><path d="M747.5 14 l7.5 7.5 h-7.5z" fill="#e6e8f0"/>
</svg>

<!-- ===== MAIN ===== -->
<div class="a" style="left:3px;top:220px;width:1686px;height:551px;background:#e9ecee"></div>
<!-- left panel -->
<div class="a" style="left:8px;top:222px;width:347px;height:25px;background:#b7bcc6;border-radius:4px 4px 0 0;border:1px solid #f6f7f8;border-bottom:none"></div>
<div class="a" style="left:8px;top:247px;width:348px;height:521px;background:#eef0f2"></div>
<div class="t" style="left:15.0px;top:228px;font-size:14px;letter-spacing:-0.195px;color:#5d6675">Opened Part Information</div>
<svg style="left:336px;top:226px" width="16" height="18"><path d="M5 3h6v7h2v1.5h-4v4.5h-1v-4.5h-4v-1.5h1z" fill="#fff"/><rect x="7" y="4" width="2.5" height="6" fill="#b8bdc7"/></svg>
<div class="t" style="left:16.5px;top:259px;font-size:14px;letter-spacing:-0.312px;color:#1f1f1f">Material:</div>
<div class="a" style="left:82px;top:253px;width:212px;height:23px;background:#fff;border:1px solid #7a7a7a"></div>
<div class="t" style="left:85.0px;top:259px;font-size:14px;letter-spacing:-0.467px;color:#111">0 Steel</div>
<svg style="left:280px;top:262px" width="10" height="6"><path d="M1 1h7l-3.5 3.5z" fill="#555"/></svg>
<div class="a" style="left:303px;top:253px;width:47px;height:24px;border:1px solid #c9cbd0;border-radius:2px;background:linear-gradient(#f8f8f9,#e2e3e6 60%,#eceded)"></div>
<svg style="left:314px;top:256px" width="26" height="20"><path d="M3 6 l5 -4 l7 5 l-2 3 l-3 -1 l-1 3 l-3 -1z" fill="#6e6e6e" stroke="#444" stroke-width="0.8"/><path d="M11 11 l6 6" stroke="#444" stroke-width="2"/></svg>
<div class="a" style="left:13px;top:288px;width:337px;height:473px;background:#fff;border:1.5px solid #a4a6a8"></div>
<div class="a" style="left:16px;top:290px;width:332px;height:22px;border:1px solid #9a9a9a;background:linear-gradient(#fdfdfd,#ebebeb 70%,#dcdcdc)"></div>
<div class="t" style="left:21.0px;top:295px;font-size:14px;letter-spacing:-0.126px;color:#111">example_auto_tooling_01.stp Information</div>
<div class="a" style="left:60px;top:314px;width:288px;height:22px;background:#7b96dc"></div>
<div class="t" style="left:63.0px;top:318px;font-size:14px;letter-spacing:-0.257px;color:#fff">Material</div>
<div class="t" style="left:86.0px;top:341px;font-size:14px;letter-spacing:-0.433px;color:#111">0 Steel</div>
<div class="t" style="left:63.0px;top:364px;font-size:14px;letter-spacing:-0.167px;color:#111">Operations</div>
<svg style="left:0;top:300px" width="100" height="90">
<g stroke="#222" stroke-width="1" stroke-dasharray="1 1" fill="none"><path d="M27.5 32 v39.5 h11"/><path d="M49.5 37 v12.5 h10"/><path d="M33 25.5 h5"/></g>
<rect x="21.5" y="19.5" width="11.5" height="12" rx="2.5" fill="#e8eef8" stroke="#98a8c4"/><path d="M24.5 25.5h5.5" stroke="#223" stroke-width="1.4"/>
<g transform="translate(38 17)">
<path d="M3 2 h10 l5 4 v9 l-3 1 h-8z" fill="#d8d8dc"/>
<path d="M6 4 h9 l3 2 v3 h-9z" fill="#f4f4f4" stroke="#9a9aa0" stroke-width="0.7"/>
<path d="M9 10 h9 M9 12.5 h9" stroke="#a8a8b0" stroke-width="1.1"/><path d="M17 3 v12 M19 4 v11" stroke="#e0e0e4" stroke-width="1"/>
<path d="M0 8 l3 -2 l8 9 l4 2 v1.5 h-5 z" fill="#eba55a"/><path d="M1.5 9 l8 8.5" stroke="#f6d2a0" stroke-width="0.9"/>
</g><g transform="translate(60 40)">
<path d="M3 2 h10 l5 4 v9 l-3 1 h-8z" fill="#d8d8dc"/>
<path d="M6 4 h9 l3 2 v3 h-9z" fill="#f4f4f4" stroke="#9a9aa0" stroke-width="0.7"/>
<path d="M9 10 h9 M9 12.5 h9" stroke="#a8a8b0" stroke-width="1.1"/><path d="M17 3 v12 M19 4 v11" stroke="#e0e0e4" stroke-width="1"/>
<path d="M0 8 l3 -2 l8 9 l4 2 v1.5 h-5 z" fill="#eba55a"/><path d="M1.5 9 l8 8.5" stroke="#f6d2a0" stroke-width="0.9"/>
</g>
<path d="M82.5 37 v20" stroke="#e2e2e2"/>
<g><rect x="40" y="70" width="14" height="10" fill="#000"/><path d="M48 80 l2 -2 h4 v2z" fill="#fff"/><path d="M54 70 l4 3 v-3z M54 77 l4 3 v-3z" fill="#1aa090"/>
<path d="M50 61 h8 v4 l-2 -1 l-4 0z" fill="#102830"/><path d="M56 62 l2 3 l-2 1z" fill="#1aa090"/>
<path d="M41 66 l3 -1 M45 64 l3 2 l2 -2 l3 2 l-4 2" fill="none" stroke="#000" stroke-width="1.3"/></g>
</svg>
<div class="a" style="left:4px;top:187px;width:4px;height:584px;background:linear-gradient(90deg,#b8babd,#9fa1a4)"></div>
<div class="a" style="left:4px;top:768px;width:355px;height:3px;background:#a2a4a6"></div>
<div class="a" style="left:359px;top:769px;width:1331px;height:2px;background:#c4c6ca"></div>
<!-- splitter -->
<div class="a" style="left:357px;top:220px;width:2px;height:551px;background:#9a9ea4"></div>
<!-- viewport -->
<div class="a" style="left:365px;top:224px;width:1318px;height:543px;background:#eef0f2"></div>
<div class="a" style="left:366px;top:225px;width:1315px;height:539px;background:linear-gradient(to top right,#7183f0,#b2baf2 50%,#f4f3f5)"></div>
<svg style="left:0;top:0" width="1692" height="889" viewBox="0 0 1692 889">
<path fill="#707070" stroke="#666666" stroke-width="0.9" stroke-linejoin="round" fill-rule="evenodd" d="M869.7,280.0 L897.0,265.4 L1087.6,375.3 L1091.6,381.0 L1092.0,390.5 L1126.0,372.8 L1126.5,389.0 L1153.4,376.3 L1153.4,398.6 L1173.6,409.7 L1173.6,412.8 L1151.3,425.9 L1129.0,412.8 L1092.6,431.0 L1069.4,415.8 L1067.3,392.5 L1063.3,388.5 L920.3,309.0 L920.3,603.2 L1067.0,686.7 L1067.7,670.5 L1072.4,667.1 L1092.0,677.9 L1152.0,643.5 L1174.3,655.0 L1174.3,659.0 L1154.8,669.8 L1145.3,669.8 L1126.4,680.0 L1126.4,700.9 L1092.0,717.8 L1091.3,724.5 L1086.0,730.0 L1067.0,742.0 L1060.0,742.0 L873.0,634.0 L870.0,629.0 Z M875.45,298.97 a4.8,7.8 25 1 0 8.70,4.06 a4.8,7.8 25 1 0 -8.70,-4.06 Z M875.70,320.61 a2.1,3.4 25 1 0 3.81,1.77 a2.1,3.4 25 1 0 -3.81,-1.77 Z M874.45,398.27 a4.8,7.8 25 1 0 8.70,4.06 a4.8,7.8 25 1 0 -8.70,-4.06 Z M875.97,450.74 a1.8,2.9 25 1 0 3.26,1.52 a1.8,2.9 25 1 0 -3.26,-1.52 Z M874.45,497.97 a4.8,7.8 25 1 0 8.70,4.06 a4.8,7.8 25 1 0 -8.70,-4.06 Z M876.10,580.11 a2.1,3.4 25 1 0 3.81,1.77 a2.1,3.4 25 1 0 -3.81,-1.77 Z M875.45,597.47 a4.8,7.8 25 1 0 8.70,4.06 a4.8,7.8 25 1 0 -8.70,-4.06 Z M1111.60,386.91 a2.1,3.4 25 1 0 3.81,1.77 a2.1,3.4 25 1 0 -3.81,-1.77 Z M1108.65,401.27 a4.8,7.8 25 1 0 8.70,4.06 a4.8,7.8 25 1 0 -8.70,-4.06 Z M1152.10,413.00 a2.9,1.9 0 1 0 5.80,0.00 a2.9,1.9 0 1 0 -5.80,-0.00 Z M1109.95,681.97 a4.8,7.8 25 1 0 8.70,4.06 a4.8,7.8 25 1 0 -8.70,-4.06 Z M1112.40,698.61 a2.1,3.4 25 1 0 3.81,1.77 a2.1,3.4 25 1 0 -3.81,-1.77 Z M1152.50,657.70 a2.9,1.9 0 1 0 5.80,0.00 a2.9,1.9 0 1 0 -5.80,-0.00 Z"/>

<g stroke="#828282" stroke-width="1.6" fill="none">
<line x1="895.6" y1="290" x2="895.6" y2="617"/>
<line x1="897" y1="619" x2="1088" y2="727"/>
<line x1="1092" y1="392" x2="1092" y2="430"/>
<line x1="1092" y1="679" x2="1092" y2="717"/>
<line x1="1128" y1="412" x2="1153" y2="399"/>
</g>
<line x1="872" y1="630.5" x2="896" y2="618" stroke="#b6bff0" stroke-width="1.3"/>

<g fill="#8c8c8c">
<circle cx="919.6" cy="296.4" r="1.3"/><circle cx="1029.8" cy="362.5" r="1.3"/>
<ellipse cx="919.7" cy="652.7" rx="2.2" ry="1.5" fill="#aab4ec"/><ellipse cx="1030" cy="716" rx="2.2" ry="1.5" fill="#a4aeea"/>
</g>
<!-- axes -->
<g stroke="#f4f6ff" stroke-width="1.5" fill="none">
<line x1="420" y1="710.5" x2="420" y2="667"/>
<line x1="420" y1="710.5" x2="381" y2="732"/>
<line x1="420" y1="710.5" x2="456" y2="731.5"/>
</g>
<g fill="#f4f6ff"><path d="M418.8 678 L420 666 L421.2 678z"/><path d="M391 724.5 L381 732 L392.5 727z"/><path d="M446 724.5 L456.5 731.5 L444.8 727z"/><circle cx="420" cy="710.5" r="1.5"/></g>
<g fill="#e8ecfc" font-family="Liberation Serif" font-size="12.5" opacity="0.9">
<text x="418" y="664">Y</text><text x="376" y="732">Z</text><text x="460" y="733">X</text>
</g>
</svg>

<!-- ===== STATUS BARS ===== -->
<div class="a" style="left:3px;top:771px;width:1687px;height:36px;background:linear-gradient(#b8bac0 0,#eceef0 1px,#e4e6e9 8px,#b6bac1 9px,#c4c7cc 20px,#d0d2d6 34px,#eeeff1 35px)"></div>
<div class="a" style="left:3px;top:771px;width:3px;height:35px;background:#9a9da2"></div>
<div class="t" style="left:13.6px;top:781px;font-size:14px;letter-spacing:0.425px;color:#3a4152">C:\Users\Public\Documents\Metalix\MBend\Examples\STEP\example_auto_tooling_01.stp</div>
<div class="a" style="left:613px;top:775px;width:1px;height:27px;background:#a6aab2;box-shadow:1px 0 0 #f4f4f6"></div>
<div class="a" style="left:1614px;top:776px;width:1px;height:24px;background:#a0a4ba;box-shadow:1px 0 0 #f4f4f6"></div>
<div class="a" style="left:1652px;top:776px;width:1px;height:24px;background:#a0a4ba;box-shadow:1px 0 0 #f4f4f6"></div>
<svg style="left:1620px;top:775px" width="70" height="26">
<rect x="5" y="4" width="17" height="18" rx="2" fill="#e0633e"/><rect x="8" y="5" width="11" height="7" fill="#f4c2b0"/><rect x="9" y="15" width="9" height="6" fill="#f6e6e0"/><rect x="10" y="17" width="2" height="3" fill="#a01"/>
<path d="M43.5 10 c0 -6 6.5 -6 6.5 0 c0 3 -0.5 5 -1 7 h-4.5 c-0.5 -2 -1 -4 -1 -7z" fill="#5a8ad6"/><path d="M44.8 18.5 h4 c0 3 -0.5 4.5 -2 4.5 c-1.5 0 -2 -1.5 -2 -4.5z" fill="#5a8ad6"/><path d="M52.5 8 c0 -6 6.5 -6 6.5 0 c0 3 -0.5 5 -1 7 h-4.5 c-0.5 -2 -1 -4 -1 -7z" fill="#2f62b8"/><path d="M53.8 16.5 h4 c0 3 -0.5 4.5 -2 4.5 c-1.5 0 -2 -1.5 -2 -4.5z" fill="#2f62b8"/>
</svg>
<div class="a" style="left:3px;top:807px;width:1687px;height:31px;background:linear-gradient(#f4f5f6 0,#e6e8eb 9px,#bcc0c6 10px,#c8cbd0 18px,#d4d6da 31px)"></div>
<div class="t" style="left:9.0px;top:816px;font-size:14px;letter-spacing:-0.637px;color:#2f3a52">Login User: DESKTOP-MV9LMS4\Administrator</div>
<div class="a" style="left:1504px;top:809px;width:1px;height:28px;background:#b4b7bc;box-shadow:1px 0 0 #f4f4f6"></div>
<div class="a" style="left:1539px;top:809px;width:1px;height:28px;background:#b4b7bc;box-shadow:1px 0 0 #f4f4f6"></div>
<div class="a" style="left:1573px;top:809px;width:1px;height:28px;background:#b4b7bc;box-shadow:1px 0 0 #f4f4f6"></div>
<div class="a" style="left:1606px;top:809px;width:1px;height:28px;background:#b4b7bc;box-shadow:1px 0 0 #f4f4f6"></div>
<div class="a" style="left:1505px;top:809px;width:184px;height:29px;background:linear-gradient(#eef0f2,#e2e4e8 8px,#c4c7cd 10px,#d4d6da)"></div>
<div class="a" style="left:1539px;top:809px;width:1px;height:28px;background:#b4b7bc"></div>
<div class="a" style="left:1573px;top:809px;width:1px;height:28px;background:#b4b7bc"></div>
<div class="a" style="left:1606px;top:809px;width:1px;height:28px;background:#b4b7bc"></div>
<div class="a" style="left:1504px;top:809px;width:1px;height:28px;background:#b4b7bc"></div>
<div class="t" style="left:1613.0px;top:816px;font-size:14px;letter-spacing:-0.082px;color:#2f3a52">Metric Units</div>
<svg style="left:1505px;top:808px" width="100" height="30">
<rect x="12" y="5" width="14" height="14" rx="1.5" fill="#f05ab8"/><rect x="15" y="6" width="8" height="5" fill="#fde"/>
<rect x="7" y="10" width="14" height="16" rx="1.5" fill="#f25cba"/><rect x="10" y="12" width="8" height="6" fill="#fde"/><rect x="10" y="21" width="6" height="4" fill="#fde"/>
<path d="M44 19 v-4 a8 8 0 0 1 16 0 v4" fill="none" stroke="#555" stroke-width="2"/><rect x="42" y="16" width="4" height="7" rx="1.5" fill="#444"/><rect x="58" y="16" width="4" height="7" rx="1.5" fill="#444"/>
<path d="M76 17 c0 -8 10 -11 17 -8 c6 3 3 8 0 8 c-3 0 -3 3 -1 5 c-4 3 -16 2 -16 -5z" fill="#e2b27a" stroke="#b08050" stroke-width="0.6"/><circle cx="82" cy="10" r="2" fill="#d22"/><circle cx="88" cy="9" r="2" fill="#ec3"/><circle cx="92" cy="14" r="1.8" fill="#4ad"/>
</svg>

<!-- ===== TASKBAR ===== -->
<div class="a" style="left:0;top:838px;width:1692px;height:51px;background:#0b111a"></div>
<div class="a" style="left:0;top:888px;width:1692px;height:1px;background:#6e6e6e"></div>
<div class="a" style="left:373px;top:838px;width:61px;height:51px;background:#3a3d45"></div>
<div class="a" style="left:192px;top:885px;width:51px;height:3px;background:#6fb3ec"></div>
<div class="a" style="left:254px;top:885px;width:51px;height:3px;background:#6fb3ec"></div>
<div class="a" style="left:316px;top:885px;width:51px;height:3px;background:#6fb3ec"></div>
<div class="a" style="left:373px;top:885px;width:61px;height:3px;background:#6fb3ec"></div>
<svg style="left:0;top:838px" width="460" height="51">
<path d="M23 17 l8 -1.2 v9.2 h-8z M32.5 15.6 l11 -1.6 v11 h-11z M23 26.5 h8 v9.2 l-8 -1.2z M32.5 26.5 h11 v11 l-11 -1.6z" fill="#fff"/>
<circle cx="96" cy="23" r="6.5" fill="none" stroke="#fff" stroke-width="1.4"/><path d="M91.5 27.5 l-8 8" stroke="#fff" stroke-width="1.6"/>
<path d="M143 17 h13 M143 35 h13 M144 20 h11 v12 h-11z M161 16 v4 M161 22 v6 M161 30 v5" fill="none" stroke="#fff" stroke-width="1.3"/>
<path d="M220.98,22.40 L224.00,23.25 L223.63,25.83 L220.49,25.80 L219.81,27.20 L221.75,29.67 L219.94,31.54 L217.41,29.67 L216.04,30.40 L216.16,33.54 L213.59,33.98 L212.65,30.99 L211.11,30.77 L209.37,33.38 L207.02,32.24 L208.02,29.26 L206.90,28.18 L203.96,29.26 L202.74,26.96 L205.29,25.14 L205.02,23.60 L202.00,22.75 L202.37,20.17 L205.51,20.20 L206.19,18.80 L204.25,16.33 L206.06,14.46 L208.59,16.33 L209.96,15.60 L209.84,12.46 L212.41,12.02 L213.35,15.01 L214.89,15.23 L216.63,12.62 L218.98,13.76 L217.98,16.74 L219.10,17.82 L222.04,16.74 L223.26,19.04 L220.71,20.86Z" fill="#b4c8e4"/><circle cx="213" cy="23" r="4" fill="#0c101a"/><path d="M230.28,33.55 L232.00,34.18 L231.66,36.08 L229.83,36.08 L229.20,37.06 L229.96,38.72 L228.39,39.82 L227.09,38.53 L225.95,38.78 L225.32,40.50 L223.42,40.16 L223.42,38.33 L222.44,37.70 L220.78,38.46 L219.68,36.89 L220.97,35.59 L220.72,34.45 L219.00,33.82 L219.34,31.92 L221.17,31.92 L221.80,30.94 L221.04,29.28 L222.61,28.18 L223.91,29.47 L225.05,29.22 L225.68,27.50 L227.58,27.84 L227.58,29.67 L228.56,30.30 L230.22,29.54 L231.32,31.11 L230.03,32.41Z" fill="#a8c0e0"/><circle cx="225.5" cy="34" r="2.2" fill="#0c101a"/>
<path d="M265 14 h9 l2 2 h16 v20 h-27z" fill="#f2c440"/><path d="M265 18 h27 v18 h-27z" fill="#fde08a"/><rect x="267" y="15" width="4" height="2" fill="#fff"/><path d="M270 27 h17 v9 h-4 v-5 h-9 v5 h-4z" fill="#2aa0f0"/>
<path d="M338 13 l14 3 l2 19 l-20 2 z" fill="#e8f4f8"/><path d="M328 32 l10 -19 l8 2 l-8 20z" fill="#3a9cb8"/><path d="M338 13 l8 2 l-4 10 l-6 -1z" fill="#8ed0e4"/><path d="M352 16 l2.5 19 l-2 1z" fill="#e0b030"/><path d="M339 12.5 h13" stroke="#ccc" stroke-width="1" stroke-dasharray="1 1"/>
<defs><linearGradient id="gMB" x1="0" y1="0" x2="0" y2="1"><stop offset="0" stop-color="#8a8c90"/><stop offset="0.5" stop-color="#d0d2d4"/><stop offset="1" stop-color="#7a7c80"/></linearGradient></defs><text transform="translate(387.5 37) scale(0.56 1)" font-family="Liberation Sans" font-weight="bold" font-size="33" fill="url(#gMB)" letter-spacing="-2">MB</text>
</svg>
<svg style="left:1400px;top:838px" width="292" height="51">
<g fill="none" stroke="#fff" stroke-width="1.3"><circle cx="29" cy="16" r="3.5"/><path d="M22 31 a7 7 0 0 1 14 0"/><circle cx="21" cy="21" r="3.5"/><path d="M13 34 a8 8 0 0 1 16 0"/>
<path d="M59 29 l7 -7 l7 7"/><path d="M87 21 h16 v12 h-16z M95 33 v4 M90 37 h10 M88 18 h4 v5"/><path d="M117 20 h3 l5 -4 v18 l-5 -4 h-3z M129 21 a6 6 0 0 1 0 8 M132 18 a10 10 0 0 1 0 14"/></g>
<path d="M240 14 h19 v14 h-12 l-4 4 v-4 h-3z" fill="#fff"/><path d="M243 18 h13 M243 21 h13 M243 24 h13" stroke="#0c101a" stroke-width="1"/>
<circle cx="258" cy="33" r="10" fill="#1b1e26" stroke="#555" stroke-width="1"/><text x="253" y="39" font-family="Liberation Sans" font-weight="bold" font-size="14" fill="#fff">2</text>
</svg>
<div class="t" style="left:1553.0px;top:845px;font-size:14px;letter-spacing:0.271px;color:#fff">11:39 AM</div>
<div class="t" style="left:1553.0px;top:867px;font-size:14px;letter-spacing:0.786px;color:#fff">8/7/2020</div>

<!-- window borders -->
<div class="a" style="left:1688px;top:181px;width:2px;height:657px;background:#f4f5f6"></div><div class="a" style="left:1690px;top:0;width:1px;height:838px;background:#707274"></div>
<div class="a" style="left:1685px;top:838px;width:1px;height:51px;background:#3a3d44"></div>
<div class="a" style="left:0;top:0;width:2px;height:838px;background:#e2e3e5"></div>
<div class="a" style="left:2px;top:0;width:1px;height:838px;background:#555"></div>

</body></html>
